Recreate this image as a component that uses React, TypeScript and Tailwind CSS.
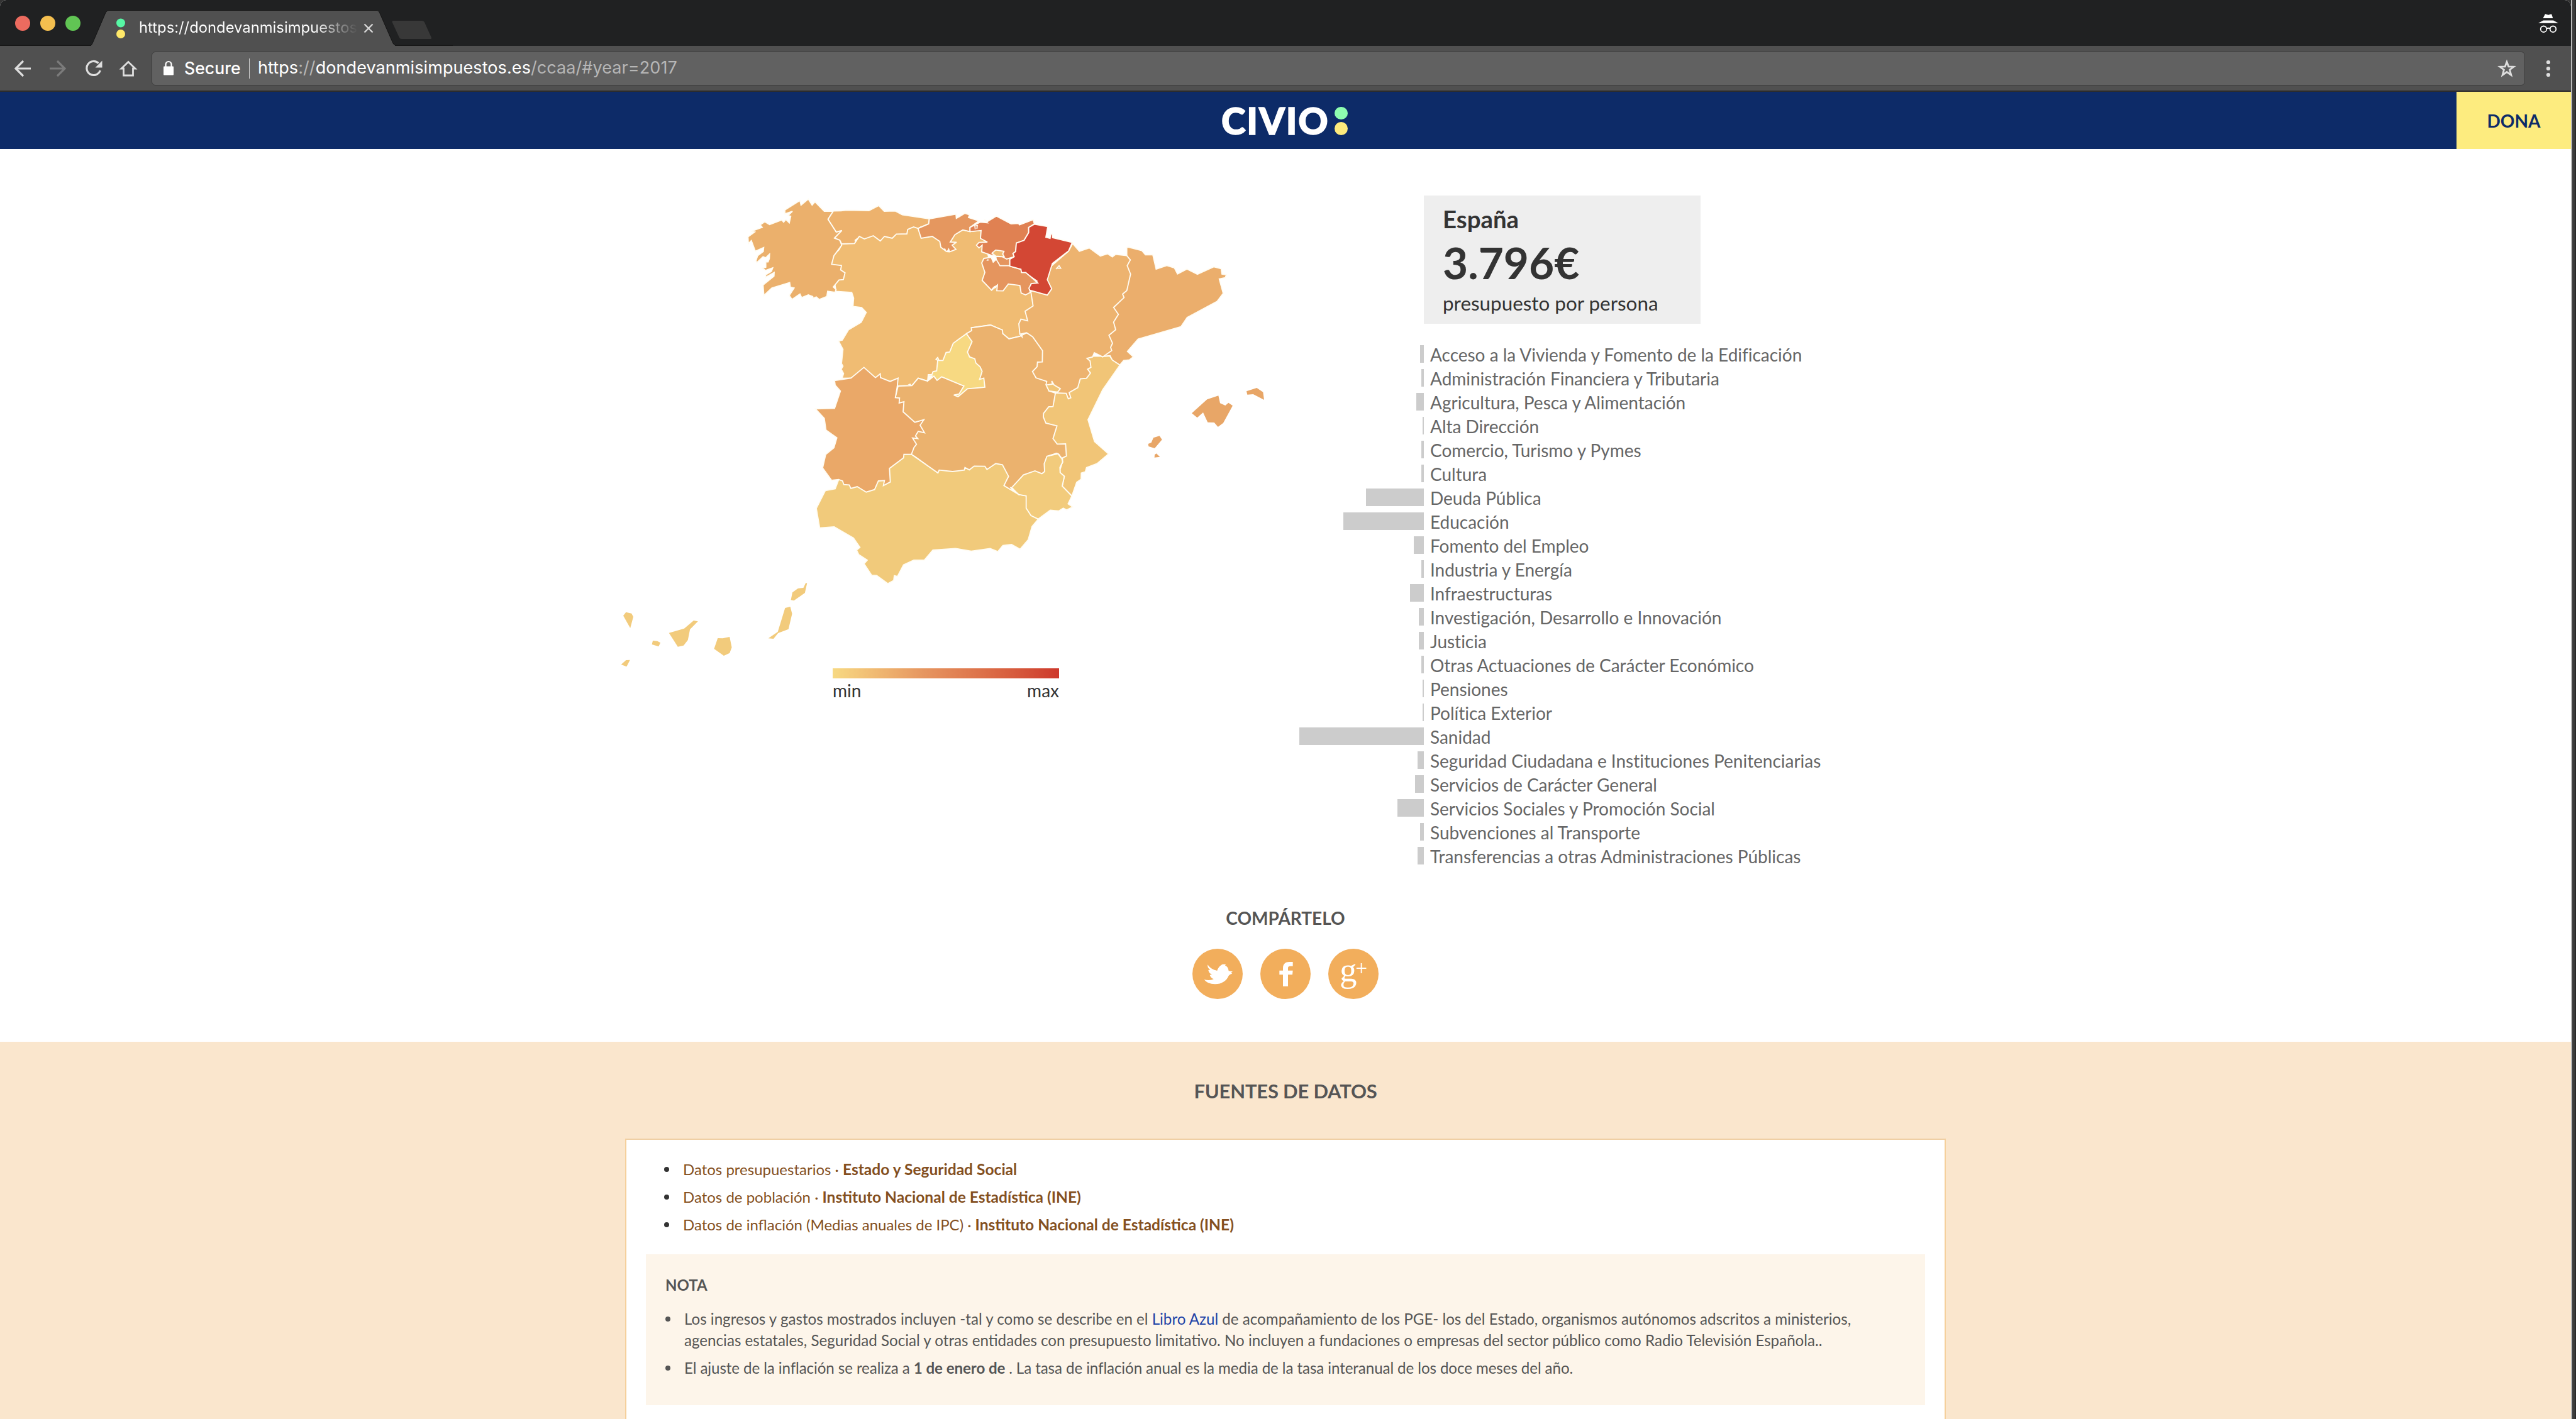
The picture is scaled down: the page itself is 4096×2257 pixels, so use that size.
import React from "react";

type Budget = { label: string; width: number };

const BUDGETS: Budget[] = [
  { label: "Acceso a la Vivienda y Fomento de la Edificación", width: 6 },
  { label: "Administración Financiera y Tributaria", width: 4 },
  { label: "Agricultura, Pesca y Alimentación", width: 12 },
  { label: "Alta Dirección", width: 2 },
  { label: "Comercio, Turismo y Pymes", width: 4 },
  { label: "Cultura", width: 4 },
  { label: "Deuda Pública", width: 92 },
  { label: "Educación", width: 128 },
  { label: "Fomento del Empleo", width: 16 },
  { label: "Industria y Energía", width: 4 },
  { label: "Infraestructuras", width: 22 },
  { label: "Investigación, Desarrollo e Innovación", width: 8 },
  { label: "Justicia", width: 8 },
  { label: "Otras Actuaciones de Carácter Económico", width: 4 },
  { label: "Pensiones", width: 2 },
  { label: "Política Exterior", width: 2 },
  { label: "Sanidad", width: 198 },
  { label: "Seguridad Ciudadana e Instituciones Penitenciarias", width: 10 },
  { label: "Servicios de Carácter General", width: 14 },
  { label: "Servicios Sociales y Promoción Social", width: 42 },
  { label: "Subvenciones al Transporte", width: 6 },
  { label: "Transferencias a otras Administraciones Públicas", width: 10 },
];

type Region = { name: string; fill: string; points: string };

/* Painted in order: later regions define the border they share with earlier ones. */
const REGIONS: Region[] = [
  {
    name: "Castilla y León",
    fill: "#f0bc73",
    points:
      "508,490 583,495 592,522 589,562 630,567 652,591 628,638 568,673 538,723 520,727 541,767 534,835 541,847 533,862 544,882 537,905 579,904 650,930 760,960 804,942 870,940 900,905 940,917 1067,900 1150,760 1155,664 1245,651 1302,675 1303,692 1333,717 1385,705 1420,690 1480,600 1437,480 1400,420 1250,400 1230,300 1230,230 1200,198 1147,205 1113,197 1060,170 900,170 600,220 510,250 480,350 500,440",
  },
  {
    name: "Castilla-La Mancha",
    fill: "#ebb26e",
    points:
      "804,942 870,940 900,905 940,917 975,895 1067,860 1130,692 1155,677 1153,664 1245,651 1302,675 1303,692 1333,717 1385,705 1417,688 1500,720 1560,900 1600,1100 1620,1276 1585,1300 1540,1400 1345,1440 1309,1460 1000,1380 868,1290 840,1180 790,1000",
  },
  {
    name: "Cataluña",
    fill: "#ebae6c",
    points:
      "1895,320 1895,282 1902,279 1967,296 1984,316 2019,315 2035,384 2086,367 2122,378 2137,407 2182,384 2232,409 2310,373 2345,382 2349,408 2370,411 2365,425 2336,431 2355,500 2326,538 2183,615 2153,659 1949,718 1898,777 1926,803 1908,817 1880,820 1862,842 1800,830 1780,790 1800,600",
  },
  {
    name: "Comunitat Valenciana",
    fill: "#f1c577",
    points:
      "1862,842 1780,960 1710,1103 1741,1207 1808,1266 1753,1312 1703,1331 1697,1351 1678,1357 1677,1387 1656,1401 1633,1467 1587,1420 1597,1373 1577,1355 1576,1330 1589,1305 1588,1285 1607,1276 1603,1218 1563,1219 1543,1193 1562,1132 1509,1119 1497,1090 1498,1072 1523,1041 1543,1040 1554,978 1620,940 1700,800 1780,800 1815,797 1826,818",
  },
  {
    name: "Aragón",
    fill: "#edb36f",
    points:
      "1637,262 1669,299 1716,283 1769,322 1804,311 1826,326 1841,314 1895,320 1912,340 1897,368 1913,408 1895,487 1875,503 1882,520 1832,567 1855,600 1832,637 1842,673 1810,700 1827,738 1818,757 1823,773 1780,803 1740,783 1732,803 1705,810 1720,823 1724,853 1708,862 1722,880 1703,905 1673,908 1661,950 1620,973 1628,998 1616,1003 1606,977 1553,975 1524,965 1510,935 1513,920 1462,903 1445,873 1467,850 1469,828 1492,827 1493,773 1446,707 1417,688 1385,695 1380,645 1390,623 1422,631 1410,585 1448,560 1437,490 1500,480 1500,400 1617,298",
  },
  {
    name: "Rincón de Ademuz",
    fill: "#f1c577",
    points: "1510,937 1540,933 1537,918 1548,937 1578,955 1565,971 1524,966",
  },
  {
    name: "Andalucía",
    fill: "#f1ca7b",
    points:
      "520,1390 504,1432 457,1441 414,1526 430,1619 499,1614 591,1667 622,1712 606,1725 616,1746 657,1773 642,1790 678,1845 702,1846 755,1885 783,1870 786,1847 801,1851 830,1795 879,1773 930,1772 970,1725 1077,1717 1153,1730 1243,1717 1280,1732 1304,1703 1345,1698 1386,1721 1425,1675 1443,1612 1473,1577 1438,1540 1415,1466 1380,1460 1309,1417 1331,1373 1302,1318 1270,1312 1228,1340 1218,1325 1167,1324 1144,1342 1123,1331 1120,1343 1064,1350 1000,1343 994,1357 868,1268 832,1268 800,1270 600,1380",
  },
  {
    name: "Murcia",
    fill: "#f2cb7c",
    points:
      "1633,1467 1615,1504 1637,1519 1608,1533 1592,1525 1570,1538 1530,1534 1472,1577 1438,1560 1415,1525 1415,1466 1380,1460 1345,1428 1402,1366 1457,1347 1490,1360 1503,1350 1501,1313 1514,1277 1560,1263 1570,1267 1585,1288 1589,1305 1576,1330 1577,1355 1597,1373 1587,1420",
  },
  {
    name: "Extremadura",
    fill: "#eaa868",
    points:
      "501,916 579,904 641,853 696,902 719,884 720,902 766,920 804,904 800,945 791,997 811,999 809,1023 832,1017 828,1065 884,1115 927,1103 909,1129 930,1165 900,1158 887,1180 898,1193 873,1190 892,1220 880,1235 868,1267 832,1268 830,1285 763,1335 767,1400 734,1417 739,1393 710,1395 692,1436 652,1448 609,1422 579,1431 571,1414 545,1412 539,1395 520,1388 487,1392 444,1333 459,1268 498,1237 512,1189 460,1152 452,1096 410,1051 501,1049 529,966 504,938",
  },
  {
    name: "Madrid",
    fill: "#f7d982",
    points:
      "1130,692 1157,730 1135,780 1145,803 1170,812 1175,832 1195,850 1205,872 1193,910 1213,904 1218,948 1135,955 1090,993 1070,985 1095,980 1118,942 1012,898 990,915 975,895 945,918 948,888 965,888 971,873 988,870 993,820 985,814 993,806 999,820 1018,820 1033,782 1050,780 1067,738",
  },
  {
    name: "Galicia",
    fill: "#ebb06c",
    points:
      "495,108 452,108 408,63 394,79 376,50 341,79 336,57 264,102 264,120 300,108 280,128 292,132 285,163 269,147 258,160 249,150 191,172 168,158 146,173 156,185 104,204 120,207 88,230 90,262 104,248 123,299 163,281 161,300 134,320 126,345 130,353 160,325 173,330 191,312 190,334 184,350 173,350 173,375 156,380 172,390 206,378 200,395 172,412 172,423 213,400 212,418 160,460 164,510 202,474 287,448 290,470 308,474 285,510 298,529 336,503 344,520 376,507 397,515 398,523 414,517 428,529 464,515 468,490 503,495 508,482 495,469 522,436 543,434 551,402 530,388 534,367 487,361 498,320 535,270 526,246 501,236 536,200 509,207 470,146",
  },
  {
    name: "Asturias",
    fill: "#edb26d",
    points:
      "495,107 532,106 560,103 665,105 712,81 738,108 791,107 824,125 953,144 950,168 899,190 878,183 850,195 846,216 796,217 776,237 739,228 719,250 686,225 643,240 619,228 596,262 535,264 526,246 501,236 536,200 509,207 470,146",
  },
  {
    name: "Cantabria",
    fill: "#e5975f",
    points:
      "953,144 1080,122 1082,142 1123,118 1145,125 1140,138 1190,154 1147,185 1147,205 1113,197 1075,220 1053,255 1083,256 1062,270 1080,290 1050,302 1035,300 1008,280 1003,252 967,228 914,237 899,190 950,168",
  },
  {
    name: "La Rioja",
    fill: "#e5955e",
    points:
      "1213,333 1248,328 1258,350 1272,337 1270,318 1337,332 1337,370 1390,385 1393,400 1413,400 1470,445 1468,452 1438,455 1430,480 1435,495 1412,507 1391,498 1385,462 1330,455 1305,488 1275,487 1278,460 1250,485 1205,438 1218,400 1203,355",
  },
  {
    name: "País Vasco",
    fill: "#e08152",
    points:
      "1215,148 1230,157 1273,131 1343,168 1378,166 1383,173 1448,148 1454,168 1427,185 1427,210 1405,247 1368,260 1365,300 1352,310 1358,325 1322,336 1302,325 1275,324 1250,318 1203,302 1205,270 1190,283 1178,270 1190,257 1230,255 1197,238 1200,200 1147,205 1147,185 1195,160 1230,163",
  },
  {
    name: "Treviño",
    fill: "#f0bc73",
    points: "1252,308 1270,293 1309,299 1303,312 1310,325 1270,322",
  },
  {
    name: "Navarra",
    fill: "#d34734",
    points:
      "1454,170 1518,181 1509,232 1529,237 1532,217 1540,217 1541,234 1635,257 1617,298 1540,357 1516,435 1537,478 1516,508 1433,485 1428,475 1440,453 1470,450 1413,400 1393,400 1390,385 1337,370 1337,337 1358,325 1352,310 1365,300 1368,260 1405,247 1427,210 1427,185",
  },
];

/* Small gaps between neighbouring borders. */
const SLIVERS = [
  "596,245 619,228 600,258",
  "515,300 535,272 526,292 498,320",
  "878,183 899,192 930,178 912,180 899,190",
  "1008,280 1018,290 1028,284 1036,300 1046,282 1052,300 1036,300",
  "1225,345 1232,336 1240,342",
  "1413,400 1470,440 1466,450 1440,424",
  "1385,700 1395,692 1400,716",
  "850,935 862,930 870,940",
  "945,918 948,892 970,892 962,905",
  "1335,1422 1352,1428 1380,1460 1350,1444",
  "868,1268 884,1275 940,1316 930,1312",
  "1497,1080 1502,1100 1510,1119 1499,1098",
  "1514,1280 1560,1260 1572,1267 1590,1290 1580,1288 1566,1268",
  "1576,1330 1592,1300 1580,1340",
  "1780,803 1815,795 1825,818 1812,802",
  "1248,480 1262,466 1278,460 1272,474",
];

const BALEARES = [
  "885,472 958,406 1012,388 1020,424 1045,435 1060,422 1080,436 1035,518 1010,537 992,516 961,515 939,468 911,493",
  "1146,367 1195,351 1225,371 1230,408 1178,381 1150,383",
  "677,618 692,612 702,589 731,580 743,598 708,639 679,630",
  "707,683 708,670 716,664 733,680",
];

const CANARIAS = [
  "64,478 73,461 91,467 97,483 87,537",
  "57,711 73,690 86,689 75,721",
  "158,615 161,597 176,599 186,607 180,625",
  "214,560 264,539 295,501 309,505 283,543 276,594 262,620 243,626",
  "374,585 390,586 413,579 420,629 413,656 394,669 362,636",
  "595,441 612,435 618,469 606,542 572,561 557,588 540,586 571,555",
  "619,367 637,348 655,345 663,321 667,323 660,369 624,406 614,403",
];

function SpainMap() {
  return (
    <svg className="block h-[760px] w-[1040px]" viewBox="-540 0 3120 2280">
      <g stroke="#fffcf3" strokeWidth="5.500" strokeLinejoin="miter" strokeMiterlimit="3">
        {REGIONS.map((r) => (
          <polygon key={r.name} points={r.points} fill={r.fill} />
        ))}
      </g>
      <g fill="#fffcf3">
        {SLIVERS.map((p) => (
          <polygon key={p} points={p} />
        ))}
      </g>
      <g fill="none" stroke="#fffcf3" strokeWidth="5">
        <path d="M1557 384L1572 368L1580 380L1560 380" />
        <path d="M1172 194L1170 178L1182 176L1180 192" />
        <path d="M1250 328L1258 350L1272 337L1290 368H1337" />
      </g>
      <g fill="#e8a667" transform="translate(1320 600)">
        {BALEARES.map((p) => (
          <polygon key={p} points={p} />
        ))}
      </g>
      <g fill="#f2cb7c" transform="translate(-600 1560) scale(1.4539 1)">
        {CANARIAS.map((p) => (
          <polygon key={p} points={p} />
        ))}
      </g>
    </svg>
  );
}

function TitleBar() {
  return (
    <div className="relative h-[73px] shrink-0 bg-[#202122]">
      <svg className="absolute inset-0 h-[73px] w-[720px]" viewBox="0 0 720 73">
        <circle cx="36" cy="37" r="12" fill="#ec6b5f" />
        <circle cx="76" cy="37" r="12" fill="#f4bf4f" />
        <circle cx="116" cy="37" r="12" fill="#61c554" />
        <path d="M0 72.5H720" stroke="#161616" strokeWidth="1.5" />
        <path d="M144 73.5L147 69L168 20Q170 16.5 173 16.5H599Q602 16.5 603.500 20L625 69L629 73.500Z" fill="#505050" stroke="#141414" strokeWidth="1" />
        <path d="M145 73H628" stroke="#505050" strokeWidth="2" />
        <circle cx="192" cy="36.500" r="7" fill="#57f7a5" />
        <circle cx="192" cy="54" r="7" fill="#ffe869" />
        <path d="M579.500 38.500L592.500 51.500M592.500 38.500L579.500 51.500" stroke="#d8d8d8" strokeWidth="2.400" />
        <path d="M625 33H671Q674 33 675 35.500L686 60Q686.500 62 684 62H639Q636 62 635 60L623.500 35Q623 33 625 33Z" fill="#383838" />
      </svg>
      <div className="absolute left-[221px] top-[24px] w-[348px] overflow-hidden whitespace-nowrap bg-gradient-to-r from-white from-80% to-[#505050] bg-clip-text text-[23.8px] leading-[40px] text-transparent">
        https://dondevanmisimpuestos
      </div>
      <svg className="absolute right-[19px] top-[20px] h-[34px] w-[34px]" viewBox="0 0 34 34">
        <path d="M9 9H24V8L22 2.200L17 3.800L12 2.200L9 8Z" fill="#fff" />
        <path d="M1 16.800L9 12.500H25L33 16.800Z" fill="#fff" />
        <g fill="none" stroke="#fff" strokeWidth="1.800">
          <circle cx="9.500" cy="26.300" r="4.800" />
          <circle cx="24.500" cy="26.300" r="4.800" />
          <path d="M14 25.500Q17 24 20 25.500" />
        </g>
      </svg>
    </div>
  );
}

function Toolbar() {
  return (
    <div className="flex h-[73px] shrink-0 items-center border-b-2 border-[#2c2c2c] bg-[#505050]">
      <svg className="h-[71px] w-[241px] shrink-0" viewBox="0 73 241 71" fill="none" strokeWidth="3.200">
        <path d="M49 109H25M37 97L25 109L37 121" stroke="#dedede" />
        <path d="M79 109H103M91 97L103 109L91 121" stroke="#7b7b7b" />
        <path d="M159.300 112A11 11 0 1 1 156.500 100.500" stroke="#dedede" />
        <path d="M162.500 96.500V107.500H151.500Z" fill="#dedede" stroke="none" />
        <path d="M196.500 109V120H211.500V109H215L204 98.500L193 109Z" stroke="#dedede" strokeWidth="2.800" />
      </svg>
      <div className="flex h-[54px] w-[3774px] shrink-0 items-center rounded-[6px] border border-[#3c3c3c] bg-[#616161] text-white">
        <svg className="ml-[17px] h-[26px] w-[18px]" viewBox="0 0 18 26">
          <rect x="1" y="9.500" width="16" height="14" rx="1" fill="#fff" />
          <path d="M4.500 10V6.500a4.500 4.500 0 0 1 9 0V10" fill="none" stroke="#fff" strokeWidth="2.200" />
        </svg>
        <span className="ml-[16px] w-[103px] text-[26.6px] font-medium">Secure</span>
        <span className="h-[32px] w-px bg-[#d0d0d0]" />
        <span className="ml-[13px] text-[27px] tracking-[0.08px] text-[#b6b6b6]">
          <span className="text-white">https</span>://<span className="text-white">dondevanmisimpuestos.es</span>/ccaa/#year=2017
        </span>
        <svg className="ml-auto mr-[13px] h-[30px] w-[30px]" viewBox="0 0 30 30">
          <path d="M15 4.500L17.800 11.800L26 12.200L19.600 17L21.900 25.300L15 20.500L8.100 25.300L10.400 17L4 12.200L12.200 11.800Z" fill="none" stroke="#dedede" strokeWidth="2.800" />
        </svg>
      </div>
      <svg className="ml-[31px] h-[30px] w-[12px]" viewBox="0 0 12 30" fill="#dedede">
        <circle cx="6" cy="5" r="3.100" />
        <circle cx="6" cy="15" r="3.100" />
        <circle cx="6" cy="25" r="3.100" />
      </svg>
    </div>
  );
}

function SiteHeader() {
  return (
    <header className="flex h-[91px] shrink-0 bg-[#0d2b68] font-[Lato,sans-serif]">
      <div className="flex flex-1 items-center pl-[1942px]">
        <span className="w-[180px] whitespace-nowrap text-[58.5px] font-black leading-[91px] tracking-[1.800px] text-white [-webkit-text-stroke:1.500px_white]">CIVIO</span>
        <span className="flex flex-col gap-[4px] pt-px">
          <span className="h-[20.500px] w-[20.500px] rounded-full bg-[#8dfdb0]" />
          <span className="h-[20.500px] w-[20.500px] rounded-full bg-[#fdea7c]" />
        </span>
      </div>
      <div className="flex w-[182px] items-center justify-center bg-[#fdec7f] text-[28px] font-bold text-[#0d2b68]">DONA</div>
    </header>
  );
}

function Summary() {
  return (
    <div className="ml-[198px] h-[204px] w-[440px] bg-[#eee] pl-[30px] pt-[17px] text-[#333]">
      <div className="text-[38.4px] font-bold leading-[40px]">España</div>
      <div className="text-[69.300px] font-bold leading-[100px]">3.796€</div>
      <div className="mt-[-6px] text-[31.4px] leading-[40px]">presupuesto por persona</div>
    </div>
  );
}

function BudgetList() {
  return (
    <ul className="mt-[29px]">
      {BUDGETS.map((b) => (
        <li key={b.label} className="flex h-[38px] items-center">
          <span className="flex w-[198px] justify-end">
            <span className="h-[28px] bg-[#ccc]" style={{ width: b.width }} />
          </span>
          <span className="ml-[10px] mt-px whitespace-nowrap text-[28px] leading-[36px] tracking-[-0.020px] text-[#666]">{b.label}</span>
        </li>
      ))}
    </ul>
  );
}

function ShareCircle({ children }: { children: React.ReactNode }) {
  return <a className="flex h-[80px] w-[80px] items-center justify-center rounded-full bg-[#f2ae5c]">{children}</a>;
}

function Share() {
  return (
    <section className="mt-[38px] flex shrink-0 flex-col items-center">
      <h3 className="text-[28px] font-bold leading-[36px] text-[#555]">COMPÁRTELO</h3>
      <div className="mt-[31px] flex gap-[28px]">
        <ShareCircle>
          <svg className="h-[80px] w-[80px]" viewBox="288 327 240 240">
            <path
              d="M344 474C360 478 380 478 390 471C378 468 374 460 371 452L382 450C369 445 365 436 364 428L373 429C363 421 359 412 361 403C372 420 388 428 406 432C410 418 422 404 433 401L447 401L444 407L450 410C457 415 460 424 461 433L480 436L472 442L478 446C470 448 464 451 461 456C450 482 425 497 395 496C372 495 354 487 344 474Z"
              fill="#fff"
            />
          </svg>
        </ShareCircle>
        <ShareCircle>
          <svg className="h-[80px] w-[80px]" viewBox="612 327 240 240">
            <path d="M720 506V451H703V431H720V420C720 399 732 390 750 390H767V410H755C747 410 744 413 744 420V431H767L765 451H744V506Z" fill="#fff" />
          </svg>
        </ShareCircle>
        <ShareCircle>
          <span className="mt-[-12px] font-['Liberation_Serif',serif] text-[55px] leading-[60px] text-white">g</span>
          <span className="mb-[18px] ml-[-2px] font-['Liberation_Serif',serif] text-[33px] leading-[30px] text-white">+</span>
        </ShareCircle>
      </div>
    </section>
  );
}

function Bullet({ className }: { className: string }) {
  return <span className={`mr-[22px] h-[8px] w-[8px] shrink-0 rounded-full ${className}`} />;
}

const SOURCES = [
  ["Datos presupuestarios", "Estado y Seguridad Social"],
  ["Datos de población", "Instituto Nacional de Estadística (INE)"],
  ["Datos de inflación (Medias anuales de IPC)", "Instituto Nacional de Estadística (INE)"],
];

function DataSources() {
  return (
    <section className="mt-[68px] flex min-h-0 flex-1 flex-col items-center overflow-hidden bg-[#fae6cd]">
      <h2 className="mt-[58px] text-[31px] font-bold leading-[40px] tracking-[-0.200px] text-[#555]">FUENTES DE DATOS</h2>
      <div className="mt-[56px] h-[600px] w-[2100px] shrink-0 border-2 border-[#f5d09c] border-t-[#efcfa4] bg-white px-[31px] pt-[25px]">
        <ul className="pl-[29px]">
          {SOURCES.map(([a, b]) => (
            <li key={a} className="flex h-[44px] items-center whitespace-nowrap text-[24px] text-[#84501f]">
              <Bullet className="bg-[#333]" />
              <span>
                {a} · <b className="text-[24.550px] font-bold">{b}</b>
              </span>
            </li>
          ))}
        </ul>
        <div className="mt-[25px] h-[240px] bg-[#fdf5ea] pl-[31px] pt-[32px] text-[#555]">
          <h4 className="text-[24px] font-bold leading-[34px]">NOTA</h4>
          <ul className="mt-[20px] text-[24.150px] leading-[34px]">
            <li className="flex items-start whitespace-nowrap">
              <Bullet className="mt-[13px] bg-[#555]" />
              <span>
                Los ingresos y gastos mostrados incluyen -tal y como se describe en el <a className="text-[#1d42a6]">Libro Azul</a> de acompañamiento de los PGE- los del Estado, organismos autónomos adscritos a ministerios,
                <br />
                agencias estatales, Seguridad Social y otras entidades con presupuesto limitativo. No incluyen a fundaciones o empresas del sector público como Radio Televisión Española..
              </span>
            </li>
            <li className="mt-[10px] flex items-start whitespace-nowrap tracking-[-0.090px]">
              <Bullet className="mt-[13px] bg-[#555]" />
              <span>
                El ajuste de la inflación se realiza a <b className="font-bold">1 de enero de </b>. La tasa de inflación anual es la media de la tasa interanual de los doce meses del año.
              </span>
            </li>
          </ul>
        </div>
      </div>
    </section>
  );
}

export default function App() {
  return (
    <div className="flex h-[2257px] w-[4096px] overflow-hidden bg-[#333]">
      <div className="flex w-[4088px] flex-col overflow-hidden rounded-t-[10px] bg-white font-[Inter,sans-serif]">
        <TitleBar />
        <Toolbar />
        <SiteHeader />
        <main className="flex min-h-0 flex-1 flex-col font-[Lato,sans-serif]">
          <div className="flex h-[1167px] shrink-0 pl-[980px] pt-[63px]">
            <div className="w-[1040px]">
              <SpainMap />
              <div className="ml-[344px] mt-[3px] w-[360px] text-[28px] leading-[36px] text-[#333]">
                <div className="h-[16px] bg-gradient-to-r from-[#f7d982] via-[#e69660] via-40% to-[#cd372b]" />
                <div className="mt-px flex justify-between">
                  <span>min</span>
                  <span>max</span>
                </div>
              </div>
            </div>
            <div className="ml-[46px] pt-[11px]">
              <Summary />
              <BudgetList />
            </div>
          </div>
          <Share />
          <DataSources />
        </main>
      </div>
      <div className="w-[2px] bg-[#b9b9b9]" />
      <div className="w-[4px] bg-[#3d3d3d]" />
      <div className="w-[2px] bg-[#2a2a2a]" />
    </div>
  );
}
